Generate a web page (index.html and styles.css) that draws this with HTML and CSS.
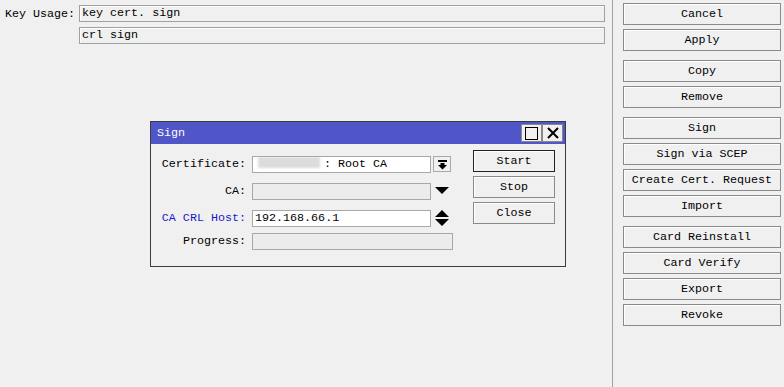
FILE: index.html
```html
<!DOCTYPE html>
<html>
<head>
    <meta charset="UTF-8">
    <title>Certificate</title>
    <link rel="stylesheet" href="styles.css">
</head>
<body>
    <div class="window">
        <div class="main">
            <div class="row">
                <span class="row-label">Key Usage:</span>
                <div class="field">key cert. sign</div>
            </div>
            <div class="row">
                <span class="row-label"></span>
                <div class="field">crl sign</div>
            </div>
        </div>
        <div class="side">
            <div class="group">
                <button class="btn">Cancel</button>
                <button class="btn">Apply</button>
            </div>
            <div class="group">
                <button class="btn">Copy</button>
                <button class="btn">Remove</button>
            </div>
            <div class="group">
                <button class="btn">Sign</button>
                <button class="btn">Sign via SCEP</button>
                <button class="btn">Create Cert. Request</button>
                <button class="btn">Import</button>
            </div>
            <div class="group">
                <button class="btn">Card Reinstall</button>
                <button class="btn">Card Verify</button>
                <button class="btn">Export</button>
                <button class="btn">Revoke</button>
            </div>
        </div>
    </div>

    <div class="dialog">
        <div class="dialog-title">
            <span>Sign</span>
            <div class="title-btns">
                <span class="tbtn"><span class="max-box"></span></span>
                <span class="tbtn">
                    <svg width="14" height="14" viewBox="0 0 14 14"><path d="M2 2 L12 12 M12 2 L2 12" stroke="#000" stroke-width="2" fill="none"/></svg>
                </span>
            </div>
        </div>
        <div class="dialog-body">
            <div class="form">
                <div class="frow">
                    <span class="flabel">Certificate:</span>
                    <div class="finput white"><span class="blur"></span>: Root CA</div>
                    <span class="drop">
                        <svg width="11" height="11" viewBox="0 0 11 11"><rect x="1" y="1" width="9" height="2" fill="#000"/><path d="M3.5 4 H7.5 V6 H10 L5.5 10.5 L1 6 H3.5 Z" fill="#000"/></svg>
                    </span>
                </div>
                <div class="frow">
                    <span class="flabel">CA:</span>
                    <div class="finput"></div>
                    <span class="arrow">
                        <svg width="14" height="8" viewBox="0 0 14 8"><path d="M0 0 H14 L7 7 Z" fill="#000"/></svg>
                    </span>
                </div>
                <div class="frow">
                    <span class="flabel blue">CA CRL Host:</span>
                    <div class="finput white">192.168.66.1</div>
                    <span class="arrow">
                        <svg width="14" height="16" viewBox="0 0 14 16"><path d="M7 0 L14 7 H0 Z M0 9 H14 L7 16 Z" fill="#000"/></svg>
                    </span>
                </div>
                <div class="frow progress-row">
                    <span class="flabel">Progress:</span>
                    <div class="finput wide"></div>
                </div>
            </div>
            <div class="dialog-btns">
                <button class="btn dbtn default">Start</button>
                <button class="btn dbtn">Stop</button>
                <button class="btn dbtn">Close</button>
            </div>
        </div>
    </div>
</body>
</html>
```

FILE: styles.css
```css
body {
    margin: 0;
    width: 784px;
    height: 387px;
    background: #f0f0f0;
    font-family: "Liberation Mono", "DejaVu Sans Mono", monospace;
    font-size: 11.7px;
    color: #000;
    overflow: hidden;
    position: relative;
}

.window {
    display: flex;
    height: 100%;
}

.main {
    width: 613px;
    border-right: 1px solid #a0a0a0;
    padding-top: 5px;
    box-sizing: border-box;
}

.row {
    display: flex;
    align-items: center;
    margin-bottom: 5px;
}

.row-label {
    width: 79px;
    padding-left: 5px;
    box-sizing: border-box;
    white-space: nowrap;
}

.field {
    width: 526px;
    height: 17px;
    line-height: 15px;
    border: 1px solid #a0a0a0;
    box-sizing: border-box;
    padding-left: 2px;
    background: #f0f0f0;
    box-shadow: inset 1px 1px 0 #fff;
}

.side {
    padding: 3px 0 0 10px;
    display: flex;
    flex-direction: column;
    gap: 9px;
}

.group {
    display: flex;
    flex-direction: column;
    gap: 4px;
}

.btn {
    width: 158px;
    height: 22px;
    padding: 0;
    background: #f0f0f0;
    border: 1px solid #8a8a8a;
    border-radius: 0;
    font-family: inherit;
    font-size: 11.7px;
    color: #000;
    box-shadow: inset 1px 1px 0 #fff;
}

/* диалог поверх формы */
.dialog {
    position: absolute;
    left: 150px;
    top: 121px;
    width: 416px;
    height: 146px;
    border: 1px solid #3c3c3c;
    box-sizing: border-box;
    background: #f0f0f0;
}

.dialog-title {
    height: 22px;
    background: #5055c8;
    color: #fff;
    display: flex;
    align-items: center;
    justify-content: space-between;
    padding-left: 6px;
}

.title-btns {
    display: flex;
    margin-right: 2px;
}

.tbtn {
    width: 19px;
    height: 16px;
    background: #f0f0f0;
    border: 1px solid #888;
    display: flex;
    align-items: center;
    justify-content: center;
}

.max-box {
    width: 11px;
    height: 11px;
    border: 1px solid #000;
}

.dialog-body {
    display: flex;
    padding-top: 6px;
}

.form {
    width: 322px;
    padding-top: 6px;
    display: flex;
    flex-direction: column;
    gap: 11px;
}

.frow {
    display: flex;
    align-items: center;
    height: 16px;
}

.progress-row {
    margin-top: -4px;
}

.flabel {
    width: 95px;
    text-align: right;
    padding-right: 6px;
}

.blue {
    color: #1a1ac8;
}

.finput {
    width: 179px;
    height: 17px;
    line-height: 15px;
    border: 1px solid #a8a8a8;
    box-sizing: border-box;
    padding-left: 2px;
    background: #ececec;
    white-space: nowrap;
    overflow: hidden;
}

.finput.white {
    background: #fff;
}

.finput.wide {
    width: 201px;
}

.blur {
    display: inline-block;
    width: 62px;
    height: 11px;
    margin: 0 4px -1px 3px;
    background: #dcdcdc;
    filter: blur(1px);
}

.drop {
    width: 18px;
    height: 16px;
    margin-left: 2px;
    border: 1px solid #a8a8a8;
    box-sizing: border-box;
    display: flex;
    align-items: center;
    justify-content: center;
}

.arrow {
    width: 18px;
    margin-left: 2px;
    display: flex;
    justify-content: center;
}

.dialog-btns {
    display: flex;
    flex-direction: column;
    gap: 4px;
}

.dbtn {
    width: 82px;
}

.dbtn.default {
    border-color: #222;
}
```
